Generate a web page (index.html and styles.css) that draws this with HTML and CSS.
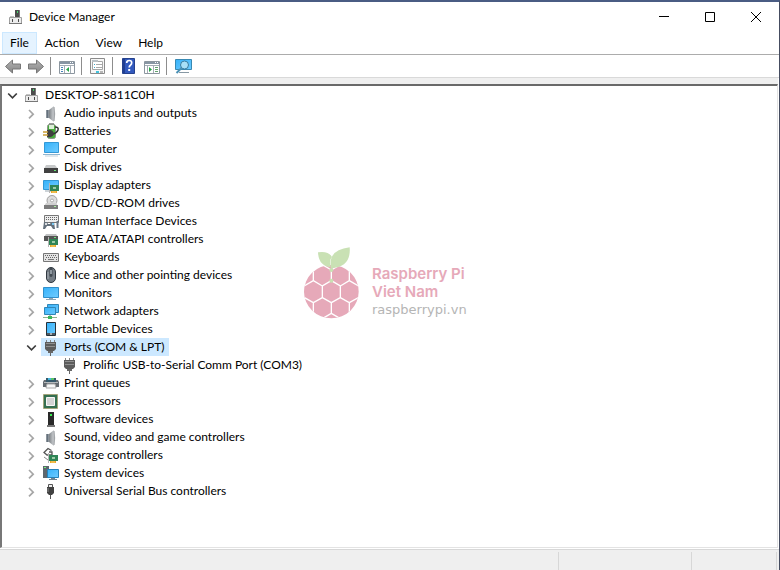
FILE: index.html
```html
<!DOCTYPE html>
<html lang="en">
<head>
<meta charset="utf-8">
<title>Device Manager</title>
<link rel="stylesheet" href="styles.css">
</head>
<body>
<svg class="defs" aria-hidden="true">
  <defs>
    <linearGradient id="blue" x1="0" y1="0" x2="1" y2="1"><stop offset="0" stop-color="#35b2fa"/><stop offset="1" stop-color="#6fcbff"/></linearGradient>
    <linearGradient id="metal" x1="0" y1="0" x2="1" y2="0"><stop offset="0" stop-color="#7f8488"/><stop offset="1" stop-color="#d0d3d6"/></linearGradient>
    <linearGradient id="arrowfill" x1="0" y1="0" x2="0" y2="1"><stop offset="0" stop-color="#b4b4b4"/><stop offset="1" stop-color="#858585"/></linearGradient>
  </defs>
  <symbol id="closed" viewBox="0 0 16 18"><path d="M6 6l4.200 4.200L6 14.400" fill="none" stroke="#a6a6a6" stroke-width="1.700"/></symbol>
  <symbol id="open" viewBox="0 0 16 18"><path d="M4.200 7.500L8.500 11.800l4.300-4.300" fill="none" stroke="#3c3c3c" stroke-width="1.700"/></symbol>
  <symbol id="device" viewBox="0 0 18 18"><path d="M8 2h5v7H8z" fill="#4c4c4c"/><path d="M12 2h1v7h-1z" fill="#777"/><path d="M10 3h1v2h-1z" fill="#44d66c"/><path d="M3 8h4v2H3z" fill="#c4c4c4"/><path d="M2.500 9.500h12v6h-12z" fill="#ececec" stroke="#a0a0a0"/><path d="M5 11h1v3H5zM11 11h1v3h-1z" fill="#4b4b4b"/><path d="M2 15h13v1H2z" fill="#777"/></symbol>
  <symbol id="speaker" viewBox="0 0 18 18"><path d="M4 6h3v8H4z" fill="#8b949c"/><path d="M5 6h1v8H5z" fill="#65717c"/><path d="M7 6l5-4v16l-5-4z" fill="url(#metal)"/><path d="M12 3q1.500 7 0 14z" fill="#8a8f94" stroke="#9a9fa3" stroke-width=".6"/></symbol>
  <symbol id="monitor" viewBox="0 0 18 18"><path d="M1.500 3.500h15v10h-15z" fill="url(#blue)" stroke="#318fca"/><path d="M7 14h4v1h3v1H4v-1h3z" fill="#8fa5b4"/></symbol>
  <symbol id="port" viewBox="0 0 18 18"><path d="M4 2h1v2H4zM8 2h1v2H8zM12 2h1v2h-1z" fill="#858585"/><path d="M3 4h11v7l-2 2H5l-2-2z" fill="#5c5c5c"/><path d="M4 5.500h9M4 8.500h9" stroke="#8f8f8f"/><path d="M6 13h5v2H6zM8 15h1v3H8z" fill="#686868"/></symbol>
  <symbol id="card" viewBox="0 0 12 11"><path d="M1 0h1v10H1z" fill="#b5b5b5"/><path d="M2 2h9v6H2z" fill="#2f8556"/><path d="M5 4h3v2H5z" fill="#9dcba7"/><path d="M3 8h6v2H3z" fill="#e8a628"/><path d="M5 8v2M7 8v2" stroke="#fff0a0" stroke-width=".6"/></symbol>
</svg>
<div class="window">
  <header class="titlebar">
    <svg class="app-icon" viewBox="0 0 18 18"><use href="#device"/></svg>
    <h1>Device Manager</h1>
    <div class="controls">
      <button aria-label="Minimize"><svg viewBox="0 0 12 12"><path d="M1 5.500h10" stroke="#000"/></svg></button>
      <button aria-label="Maximize"><svg viewBox="0 0 12 12"><path d="M1.500 1.500h9v9h-9z" fill="none" stroke="#000"/></svg></button>
      <button aria-label="Close"><svg viewBox="0 0 12 12"><path d="M1 1l10 10M11 1L1 11" stroke="#000"/></svg></button>
    </div>
  </header>
  <nav class="menu"><button class="active">File</button><button>Action</button><button>View</button><button>Help</button></nav>
  <div class="toolbar" role="toolbar">
    <button aria-label="Back"><svg viewBox="0 0 19 18"><path d="M2.500 9.500l7-6.500v4h8v5h-8v4z" fill="url(#arrowfill)" stroke="#777"/></svg></button>
    <button aria-label="Forward"><svg viewBox="0 0 19 18"><path d="M17.500 9.500l-7-6.500v4h-8v5h8v4z" fill="url(#arrowfill)" stroke="#777"/></svg></button>
    <span class="separator"></span>
    <button aria-label="Show console tree"><svg viewBox="0 0 19 18"><path d="M2.500 4.500h15v12h-15z" fill="#fff" stroke="#8c969f"/><path d="M3 5h14v2H3z" fill="#8795a3"/><path d="M13 5h1v1h-1zM15 5h1v1h-1z" fill="#fff"/><path d="M3 8.500h14M7.500 9v7M13.500 9v7" stroke="#a4adb5"/><path d="M4 10.500h2M4 12.500h2M4 14.500h2" stroke="#4b86bb"/><path d="M12 10v5l-3-2.500z" fill="#28a448"/></svg></button>
    <span class="separator"></span>
    <button aria-label="Properties"><svg viewBox="0 0 19 18"><path d="M2.500 1.500h14v15h-14z" fill="#f7f7f7" stroke="#8b8b8b"/><path d="M4.500 4.500h10v8h-10z" fill="#fff" stroke="#a6a6a6"/><path d="M4 3h6v2H4z" fill="#b9c0c5"/><path d="M6 7.500h1M6 10.500h1" stroke="#3da8cb"/><path d="M8 7.500h6M8 10.500h6" stroke="#aaa"/><path d="M8 14h3v2H8z" fill="#43c2dc"/><path d="M12 14h3v2h-3z" fill="#b7b7b7"/></svg></button>
    <span class="separator"></span>
    <button aria-label="Help"><svg viewBox="0 0 19 18"><path d="M3.500 1.500h12v15h-12z" fill="#3259bd" stroke="#25418d"/><path d="M4 2h2v14H4z" fill="#203e91"/><path d="M7.700 6q0-2.500 2.500-2.500t2.500 2.300q0 1.500-1.300 2.400-1.200.800-1.200 2.400" fill="none" stroke="#fff" stroke-width="1.700"/><path d="M9.200 12h2v2h-2z" fill="#fff"/></svg></button>
    <button aria-label="Show action pane"><svg viewBox="0 0 19 18"><path d="M2.500 4.500h15v12h-15z" fill="#fff" stroke="#8c969f"/><path d="M3 5h14v2H3z" fill="#8795a3"/><path d="M13 5h1v1h-1zM15 5h1v1h-1z" fill="#fff"/><path d="M3 8.500h14M5.500 9v7M11.500 9v7" stroke="#a4adb5"/><path d="M13 10.500h3M13 12.500h3M13 14.500h3" stroke="#63a36e"/><path d="M7 10v5l3-2.500z" fill="#28a448"/></svg></button>
    <span class="separator"></span>
    <button aria-label="Scan for hardware changes"><svg viewBox="0 0 19 18"><path d="M2.500 2.500h16v10h-16z" fill="url(#blue)" stroke="#3889b3"/><path d="M6 15.500h10" stroke="#8798a4"/><circle cx="11.500" cy="8" r="4" fill="#a8e0f8" stroke="#397ca0"/><path d="M8.500 11l-5 5" stroke="#4a91b5" stroke-width="2"/></svg></button>
  </div>
  <main class="pane">
    <ul class="tree">
      <li>
        <div class="row"><svg class="chevron"><use href="#open"/></svg><span class="item"><svg viewBox="0 0 18 18"><use href="#device"/></svg>DESKTOP-S811C0H</span></div>
        <ul>
          <li><div class="row"><svg class="chevron"><use href="#closed"/></svg><span class="item"><svg viewBox="0 0 18 18"><use href="#speaker"/></svg>Audio inputs and outputs</span></div></li>
          <li><div class="row"><svg class="chevron"><use href="#closed"/></svg><span class="item"><svg viewBox="0 0 18 18"><path d="M7 1h5v2H7z" fill="#999"/><rect x="5.500" y="2.500" width="8" height="14" rx="2" fill="#46ac3b" stroke="#8a9288"/><path d="M7 3h5v4H7z" fill="#dceed7"/><path d="M13 5q4 0 3 3t-5 4" fill="none" stroke="#333" stroke-width="1.500"/><path d="M5 8q6-1 7 4-2 4-7 3z" fill="#3f3f3f"/><path d="M1 10h5M1 13h5" stroke="#c99d35" stroke-width="1.500"/></svg>Batteries</span></div></li>
          <li><div class="row"><svg class="chevron"><use href="#closed"/></svg><span class="item"><svg viewBox="0 0 18 18"><path d="M2.500 2.500h14v10h-14z" fill="url(#blue)" stroke="#3398d6"/><path d="M1 14.500h17" stroke="#8fb6d2"/><path d="M3 16h13" stroke="#c4d2db"/></svg>Computer</span></div></li>
          <li><div class="row"><svg class="chevron"><use href="#closed"/></svg><span class="item"><svg viewBox="0 0 18 18"><path d="M4 7h9l3 4H2z" fill="#c7c9ca"/><path d="M2 10h14v5H2z" fill="#414141"/><path d="M12 12h2v1h-2z" fill="#65e571"/></svg>Disk drives</span></div></li>
          <li><div class="row"><svg class="chevron"><use href="#closed"/></svg><span class="item"><svg viewBox="0 0 18 18"><path d="M1.500 4.500h15v9h-15z" fill="url(#blue)" stroke="#3298d5"/><path d="M3 15h6" stroke="#9ba8b1"/><use href="#card" x="6" y="7" width="12" height="11"/></svg>Display adapters</span></div></li>
          <li><div class="row"><svg class="chevron"><use href="#closed"/></svg><span class="item"><svg viewBox="0 0 18 18"><circle cx="10" cy="6.500" r="5" fill="#ddd" stroke="#a0a0a0"/><circle cx="10" cy="6.500" r="1.500" fill="#fff" stroke="#aaa"/><path d="M4 9h10l2 3H2z" fill="#d0d0d0"/><path d="M2 11h14v4H2z" fill="#7c7c7c"/><path d="M12 12h2v1h-2z" fill="#a6ef9c"/></svg>DVD/CD-ROM drives</span></div></li>
          <li><div class="row"><svg class="chevron"><use href="#closed"/></svg><span class="item"><svg viewBox="0 0 18 18"><path d="M2.500 3.500h14v7h-14z" fill="#eee" stroke="#777"/><path d="M4 5.500h11M4 7.500h11" stroke="#666" stroke-dasharray="1 1"/><path d="M1 17l1-7h3l1 2h2l1-2h3l1 7h-2l-2-3H5l-2 3z" fill="#65717d"/><path d="M4 11v2M3 12h2" stroke="#fff"/><path d="M15.500 9v7" stroke="#6b7987" stroke-width="2"/><path d="M10 11h2v2h-2z" fill="#79c8f2"/></svg>Human Interface Devices</span></div></li>
          <li><div class="row"><svg class="chevron"><use href="#closed"/></svg><span class="item"><svg viewBox="0 0 18 18"><path d="M4 4h10l2 3H2z" fill="#bfc1c2"/><path d="M2 6h14v5H2z" fill="#555"/><path d="M12 7h2v1h-2z" fill="#72e37b"/><use href="#card" x="5" y="7" width="12" height="11"/></svg>IDE ATA/ATAPI controllers</span></div></li>
          <li><div class="row"><svg class="chevron"><use href="#closed"/></svg><span class="item"><svg viewBox="0 0 18 18"><path d="M1.500 5.500h15v8h-15z" fill="#e4e4e4" stroke="#777"/><path d="M3 7.500h12M4 9.500h11M3 11.500h2M14 11.500h2" stroke="#656565" stroke-dasharray="1 1"/><path d="M6 11.500h6" stroke="#777"/></svg>Keyboards</span></div></li>
          <li><div class="row"><svg class="chevron"><use href="#closed"/></svg><span class="item"><svg viewBox="0 0 18 18"><rect x="4.500" y="1.500" width="9" height="15" rx="4.500" fill="#737b83" stroke="#303840"/><path d="M7.500 2v8q1.500 2 3 0V2z" fill="#414951"/><path d="M9 4v4" stroke="#dce6ed"/><path d="M6 6v7" stroke="#a8afb5"/></svg>Mice and other pointing devices</span></div></li>
          <li><div class="row"><svg class="chevron"><use href="#closed"/></svg><span class="item"><svg viewBox="0 0 18 18"><use href="#monitor"/></svg>Monitors</span></div></li>
          <li><div class="row"><svg class="chevron"><use href="#closed"/></svg><span class="item"><svg viewBox="0 0 18 18"><path d="M5.500 2.500h11v8h-11z" fill="url(#blue)" stroke="#3186b7"/><path d="M2.500 5.500h11v7h-11z" fill="url(#blue)" stroke="#3186b7"/><path d="M8 13v2" stroke="#71808a"/><path d="M1 15.500h14" stroke="#8bb28d"/><path d="M6 14h4v3H6z" fill="#39b759"/></svg>Network adapters</span></div></li>
          <li><div class="row"><svg class="chevron"><use href="#closed"/></svg><span class="item"><svg viewBox="0 0 18 18"><path d="M4.500 2.500h9v13h-9z" fill="url(#blue)" stroke="#26313a"/><path d="M5 13h8v2H5z" fill="#515b63"/><path d="M8 14h2" stroke="#fff"/></svg>Portable Devices</span></div></li>
          <li>
            <div class="row"><svg class="chevron"><use href="#open"/></svg><span class="item selected"><svg viewBox="0 0 18 18"><use href="#port"/></svg>Ports (COM &amp; LPT)</span></div>
            <ul><li><div class="row"><span class="chevron"></span><span class="item"><svg viewBox="0 0 18 18"><use href="#port"/></svg>Prolific USB-to-Serial Comm Port (COM3)</span></div></li></ul>
          </li>
          <li><div class="row"><svg class="chevron"><use href="#closed"/></svg><span class="item"><svg viewBox="0 0 18 18"><path d="M4 4h10v4H4z" fill="#35586a"/><path d="M6 4h3v2H6z" fill="#45b8df"/><path d="M9 4h3v2H9z" fill="#5ac567"/><path d="M2 6h2v2h10V6h2l1 2v5H1V8z" fill="#656b70"/><path d="M2 8h14v1H2z" fill="#b5b9bc"/><path d="M5 10h8l1 4H4z" fill="#f8f8f8" stroke="#aaa"/></svg>Print queues</span></div></li>
          <li><div class="row"><svg class="chevron"><use href="#closed"/></svg><span class="item"><svg viewBox="0 0 18 18"><path d="M1.500 2.500h14v14h-14z" fill="#397651" stroke="#a58d4f" stroke-dasharray="1 1"/><path d="M2 3h13v13H2z" fill="#356f50"/><path d="M4.500 5.500h8v8h-8z" fill="#d4d4d4" stroke="#f7f7f7"/></svg>Processors</span></div></li>
          <li><div class="row"><svg class="chevron"><use href="#closed"/></svg><span class="item"><svg viewBox="0 0 18 18"><path d="M6 2h6v13H6z" fill="#292929"/><path d="M8 4h2v2H8z" fill="#3bed52"/><path d="M5 15h8v2H5z" fill="#777"/></svg>Software devices</span></div></li>
          <li><div class="row"><svg class="chevron"><use href="#closed"/></svg><span class="item"><svg viewBox="0 0 18 18"><use href="#speaker"/></svg>Sound, video and game controllers</span></div></li>
          <li><div class="row"><svg class="chevron"><use href="#closed"/></svg><span class="item"><svg viewBox="0 0 18 18"><path d="M9.500 4.500L6 2.500 2 6.500 5 9h5V6H7" fill="none" stroke="#555" stroke-width="1.300"/><path d="M2 11l4 3" stroke="#888"/><use href="#card" x="5" y="7" width="12" height="11"/></svg>Storage controllers</span></div></li>
          <li><div class="row"><svg class="chevron"><use href="#closed"/></svg><span class="item"><svg viewBox="0 0 18 18"><path d="M1 2h6v12H1z" fill="#5d676e"/><path d="M2 3h2v1H2z" fill="#71f47b"/><path d="M5.500 5.500h11v8h-11z" fill="url(#blue)" stroke="#2482b9"/><path d="M9 14h4v1h2v1H7v-1h2z" fill="#718390"/></svg>System devices</span></div></li>
          <li><div class="row"><svg class="chevron"><use href="#closed"/></svg><span class="item"><svg viewBox="0 0 18 18"><path d="M6.500 2.500h4v3h-4z" fill="#eee" stroke="#555"/><path d="M5 5h7v6l-2 2H7l-2-2z" fill="#414141"/><path d="M8 13h1v4H8z" fill="#555"/><path d="M6 6v4" stroke="#888"/></svg>Universal Serial Bus controllers</span></div></li>
        </ul>
      </li>
    </ul>
    <aside class="watermark">
      <svg viewBox="36 15 174 225"><defs><clipPath id="berry"><ellipse cx="124" cy="155" rx="82" ry="80"/></clipPath></defs><g clip-path="url(#berry)"><path d="M36 70h174v170H36z" fill="#e6a9b9"/><path d="M124 90v32l-27 16v35l27 15 27-15v-35l-27-16M124 90L97 74 70 90v32l27 16M70 122l-30 17M70 90L36 110M124 90l27-16 27 16v32l-27 16M178 122l30 17M178 90l32 20M97 173l-27 15v32l27 16 27-16v-32M70 188l-30-17M151 173l27 15v32l-27 16-27-16M178 188l30-17" fill="none" stroke="#fff" stroke-width="4"/></g><path d="M123 85Q112 30 179 22 184 81 123 85Z" fill="#c9e1b4"/><path d="M122 82Q86 78 84 37q31-5 42 14-10 9-4 31z" fill="#c9e1b4"/><circle cx="124" cy="90" r="6" fill="#c9e1b4"/><circle cx="124" cy="122" r="6" fill="#c9e1b4"/></svg>
      <div><strong>Raspberry Pi<br>Viet Nam</strong><span>raspberrypi.vn</span></div>
    </aside>
  </main>
  <footer class="status"><span></span><span></span><span></span></footer>
</div>
</body>
</html>
```
FILE: styles.css
```css
* { box-sizing: border-box; }
body { margin: 0; font: 12px/18px Lato, "Open Sans", sans-serif; color: #000; }
button { border: 0; padding: 0; background: none; font: inherit; color: inherit; }
ul { list-style: none; margin: 0; padding: 0; }
svg { display: block; }
.defs { position: absolute; width: 0; height: 0; }
.window { display: flex; flex-direction: column; height: 100vh; border-top: 2px solid #4a5c83; border-right: 1px solid #454c60; background: #fff; }
.titlebar { display: flex; align-items: center; height: 30px; padding-left: 7px; }
.app-icon { width: 18px; height: 18px; }
h1 { flex: 1; margin: 0 0 0 4px; font-size: 12px; font-weight: 400; }
.controls { display: flex; height: 28px; }
.controls button { display: grid; place-items: center; width: 46px; }
.controls svg { width: 12px; height: 12px; }
.menu { display: flex; height: 22px; padding-left: 2px; }
.menu button { padding: 0 7px; border: 1px solid transparent; }
.menu .active { background: #e5f3ff; border-color: #cce8ff; }
.toolbar { display: flex; align-items: center; height: 24px; padding-left: 1px; border-top: 1px solid #acacac; border-bottom: 1px solid #d9d9d9; }
.toolbar button { display: grid; place-items: center; width: 23px; }
.toolbar svg { width: 19px; height: 18px; }
.separator { width: 1px; height: 18px; margin: 0 4px 0 3px; background: #8d8d8d; }
.pane { position: relative; flex: 1; min-height: 0; margin: 6px 1px 1px 0; overflow: hidden; border-style: solid; border-width: 2px 1px 1px 2px; border-color: #696969 #e3e3e3 #e3e3e3 #777; box-shadow: 0 -6px 0 #efefef; }
.tree { padding-left: 2px; }
.tree ul { padding-left: 19px; }
.row { display: flex; height: 18px; white-space: nowrap; }
.chevron { width: 16px; height: 18px; }
.item { display: flex; gap: 4px; margin-left: 2px; padding: 0 4px 0 1px; }
.item svg { width: 18px; height: 18px; }
.selected { background: #cce8ff; }
.watermark { position: absolute; left: 300px; top: 159px; display: flex; gap: 12px; }
.watermark svg { width: 58px; height: 75px; }
.watermark div { padding-top: 20px; }
.watermark strong { display: block; color: #e6a9b9; font: 600 15px/18px Inter, sans-serif; }
.watermark span { display: block; color: #b5b5b5; font: 13px/18px "DejaVu Sans", sans-serif; }
.status { display: flex; height: 21px; border-top: 1px solid #d7d7d7; background: #efefef; }
.status span { flex: 0 0 133px; margin-top: 2px; border-right: 1px solid #d7d7d7; }
.status span:first-child { flex: 1; }
.status span:last-child { flex-basis: 85px; margin-right: 2px; }
```
